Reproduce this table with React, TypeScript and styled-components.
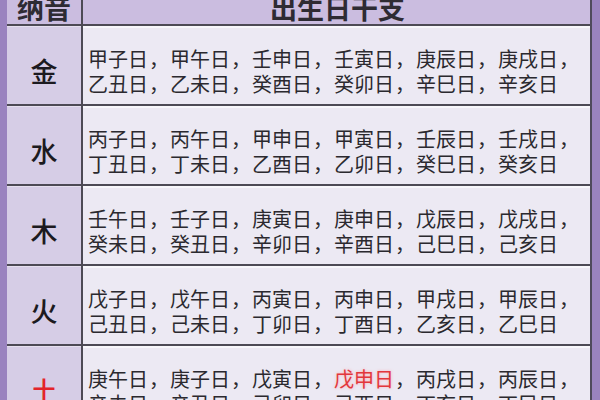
import * as React from 'react';
import styled, { createGlobalStyle } from 'styled-components';

const GlobalStyle = createGlobalStyle`
  html, body {
    margin: 0;
    padding: 0;
    background: #9a83bf;
  }
  body {
    font-family: "Noto Sans CJK SC", "Noto Sans", sans-serif;
  }
`;

type Element = {
  name: string,
  red?: boolean,
  lines: string[][],
};

const rows: Element[] = [
  {
    name: '金',
    lines: [
      ['甲子日', '甲午日', '壬申日', '壬寅日', '庚辰日', '庚戌日'],
      ['乙丑日', '乙未日', '癸酉日', '癸卯日', '辛巳日', '辛亥日'],
    ],
  },
  {
    name: '水',
    lines: [
      ['丙子日', '丙午日', '甲申日', '甲寅日', '壬辰日', '壬戌日'],
      ['丁丑日', '丁未日', '乙酉日', '乙卯日', '癸巳日', '癸亥日'],
    ],
  },
  {
    name: '木',
    lines: [
      ['壬午日', '壬子日', '庚寅日', '庚申日', '戊辰日', '戊戌日'],
      ['癸未日', '癸丑日', '辛卯日', '辛酉日', '己巳日', '己亥日'],
    ],
  },
  {
    name: '火',
    lines: [
      ['戊子日', '戊午日', '丙寅日', '丙申日', '甲戌日', '甲辰日'],
      ['己丑日', '己未日', '丁卯日', '丁酉日', '乙亥日', '乙巳日'],
    ],
  },
  {
    name: '土',
    red: true,
    lines: [
      ['庚午日', '庚子日', '戊寅日', '戊申日', '丙戌日', '丙辰日'],
      ['辛未日', '辛丑日', '己卯日', '己酉日', '丁亥日', '丁巳日'],
    ],
  },
];

const hot = '戊申日';

export default function App() {
  return (
    <>
      <GlobalStyle />
      <Page>
        <Table>
          <HeadCell>纳音</HeadCell>
          <HeadCell $wide>出生日干支</HeadCell>
          {rows.map((row) => (
            <React.Fragment key={row.name}>
              <NameCell $red={row.red}>{row.name}</NameCell>
              <DaysCell>
                {row.lines.map((line, li) => (
                  <Line key={li}>
                    {line.map((day, di) => {
                      const last = li === row.lines.length - 1 && di === line.length - 1;
                      return (
                        <React.Fragment key={day}>
                          <Day $hot={row.red && day === hot}>{day}</Day>
                          <Comma>{last ? '' : '，'}</Comma>
                        </React.Fragment>
                      );
                    })}
                  </Line>
                ))}
              </DaysCell>
            </React.Fragment>
          ))}
        </Table>
      </Page>
    </>
  );
}

const Page = styled.div`
  width: 600px;
  height: 400px;
  overflow: hidden;
  background: #9a83bf;
  padding: 0 8px 0 7px;
  box-sizing: border-box;
`;

const Table = styled.div`
  margin-top: -14px;
  display: grid;
  grid-template-columns: 76px 1fr;
  grid-auto-rows: 80px;
  grid-template-rows: 40px;
  border-right: 2px solid #4f4a5c;
`;

const HeadCell = styled.div<{ $wide?: boolean }>`
  background: #cbbde0;
  border-bottom: 2px solid #4d4a55;
  border-right: ${(p) => (p.$wide ? '0' : '2px solid #4d4a55')};
  display: flex;
  align-items: center;
  justify-content: center;
  font-size: 27px;
  font-weight: 700;
  color: #2e2b33;
  line-height: 27px;
  padding-top: 5px;
  padding-left: ${(p) => (p.$wide ? '2px' : '0')};
`;

const NameCell = styled.div<{ $red?: boolean }>`
  background: #d6cde6;
  border-bottom: 2px solid #4d4a55;
  border-right: 2px solid #4d4a55;
  box-shadow: inset 0 1px 0 #e6e0ef;
  display: flex;
  align-items: center;
  justify-content: center;
  padding-top: 10px;
  font-size: 27px;
  font-weight: 500;
  color: ${(p) => (p.$red ? '#e3242b' : '#1c1a20')};
`;

const DaysCell = styled.div`
  background: #ece9f3;
  border-bottom: 2px solid #4d4a55;
  box-shadow: inset 0 2px 0 #f8f7fb;
  display: flex;
  flex-direction: column;
  justify-content: center;
  padding: 12px 0 0 5px;
`;

const Line = styled.div`
  display: flex;
  font-size: 20px;
  line-height: 25px;
  color: #2b292f;
  white-space: nowrap;
`;

const Day = styled.span<{ $hot?: boolean }>`
  width: 61px;
  flex: none;
  color: ${(p) => (p.$hot ? '#e2373c' : 'inherit')};
  text-shadow: ${(p) => (p.$hot ? '0 0 3px rgba(255, 150, 150, 0.7)' : 'none')};
`;

const Comma = styled.span`
  width: 21px;
  flex: none;
`;
